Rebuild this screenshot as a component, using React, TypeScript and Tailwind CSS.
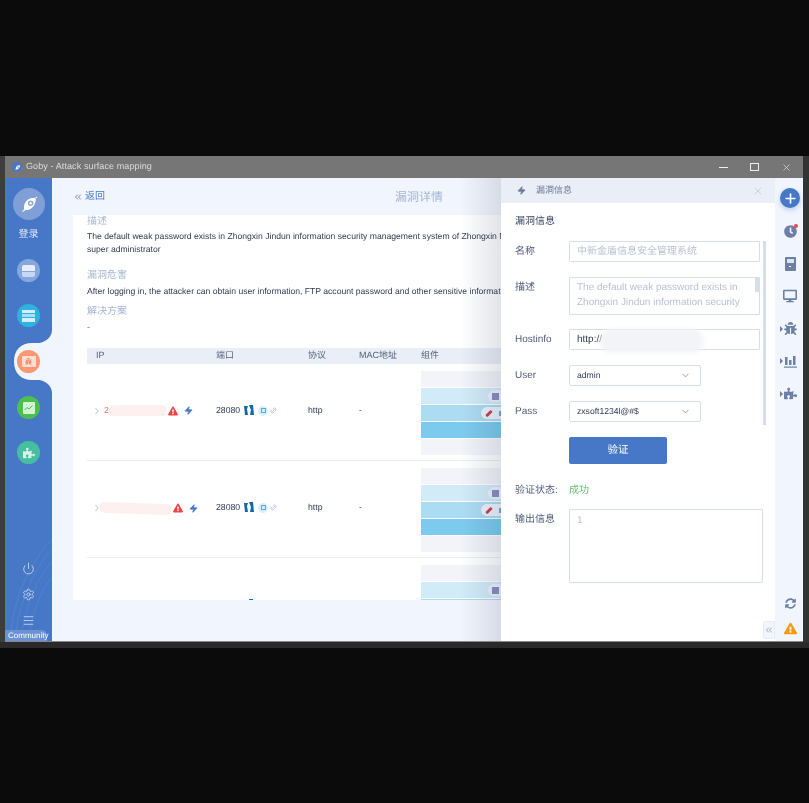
import { ChevronDown, ChevronRight, ChevronsLeft, Link2, Menu, Plus, Power, Settings, X, Zap } from "lucide-react";
import { FaBug, FaClock, FaDesktop, FaExclamationTriangle, FaPuzzlePiece, FaSyncAlt } from "react-icons/fa";

const font = "font-['Liberation_Sans','Noto_Sans_CJK_SC',sans-serif] [text-rendering:geometricPrecision]";

function Logo({ size }: { size: number }) {
  return (
    <svg width={size} height={size} viewBox="0 0 32 32" fill="none">
      <path d="M7 25c2-1 3-2 3-3-1-5 2-11 8-13 3-1 5-1 6 0 1 2 0 6-2 9-3 4-7 6-10 5-1 1-3 3-5 2z" fill="white" />
      <circle cx="18" cy="15" r="3.4" fill="#8ea9d8" />
      <circle cx="18" cy="15" r="1.5" fill="white" />
      <circle cx="25" cy="8" r="1" fill="white" />
    </svg>
  );
}

function NavIcon({ bg, children }: { bg: string; children: React.ReactNode }) {
  return (
    <div className={`flex h-[23px] w-[23px] items-center justify-center rounded-full ${bg}`}>
      {children}
    </div>
  );
}

function Sidebar() {
  return (
    <div className="relative flex w-[47px] shrink-0 flex-col items-center overflow-hidden bg-[#4778c7] pt-[10px]">
      <div className="flex h-[32px] w-[32px] items-center justify-center rounded-full bg-[#7f9fd6]">
        <Logo size={26} />
      </div>
      <div className="mt-[8px] text-[10px] leading-[14px] text-[#e4ecfa]">登录</div>
      <div className="mt-[17px]">
        <NavIcon bg="bg-[#87a6dc]">
          <div className="h-[12px] w-[13px] rounded-[2px] border-b-[5px] border-t-[6px] border-b-[#c9d8f2] border-t-[#e6eefb]" />
        </NavIcon>
      </div>
      <div className="mt-[22px]">
        <NavIcon bg="bg-[#30b1e0]">
          <div className="flex h-[12px] w-[13px] flex-col gap-[1px]">
            <div className="h-[3px] bg-[#d3effa]" />
            <div className="h-[3px] bg-[#a9e0f5]" />
            <div className="h-[4px] bg-[#d3effa]" />
          </div>
        </NavIcon>
      </div>

      {/* white tab behind the selected item */}
      <svg className="absolute left-0 top-[152px]" width="47" height="63" viewBox="0 0 47 63">
        <path d="M47 0v63c0-7-6-12-13-13h-7C16 50 9 43 9 31.5S16 13 27 13h7c7-1 13-6 13-13z" fill="#f1f5fd" />
      </svg>

      <div className="relative mt-[23px]">
        <NavIcon bg="bg-[#fb9772]">
          <div className="flex h-[11px] w-[14px] items-center justify-center rounded-[1px] bg-[#fde0d3]">
            <FaBug size={7} className="text-[#ef8a63]" />
          </div>
        </NavIcon>
      </div>
      <div className="relative mt-[23px]">
        <NavIcon bg="bg-[#4bc04f]">
          <div className="flex h-[12px] w-[12px] items-center justify-center rounded-[1px] bg-[#d5f2d3]">
            <svg width="9" height="6" viewBox="0 0 9 6" fill="none">
              <path d="M0.5 5 3 2.5l2 1.5 3.5-3.5" stroke="#4bc04f" strokeWidth="1" />
            </svg>
          </div>
        </NavIcon>
      </div>
      <div className="mt-[22px]">
        <NavIcon bg="bg-[#45bf9f]">
          <FaPuzzlePiece size={12} className="text-[#d8f3eb]" />
        </NavIcon>
      </div>

      {/* wave lines at the bottom */}
      <svg className="absolute bottom-0 left-0" width="47" height="110" viewBox="0 0 47 110" fill="none">
        <path d="M5 110C8 70 22 35 47 8" stroke="#5f8ad0" strokeWidth="0.5" />
        <path d="M10 110C13 75 26 42 47 18" stroke="#5f8ad0" strokeWidth="0.5" />
        <path d="M16 110C19 80 30 50 47 30" stroke="#5f8ad0" strokeWidth="0.5" />
        <path d="M24 110C26 85 34 62 47 46" stroke="#5f8ad0" strokeWidth="0.5" />
      </svg>

      <div className="relative mt-auto flex flex-col items-center gap-[13px] text-[#dbe5f7]">
        <Power size={13} strokeWidth={1.4} />
        <Settings size={13} strokeWidth={1.4} />
        <Menu size={13} strokeWidth={1.4} />
      </div>
      <div className="relative mt-[3px] h-[11px] w-[42px] self-start rounded-tr-[5px] bg-[#6b92d3] pl-[3px] text-[8px] leading-[11px] text-white">
        Community
      </div>
    </div>
  );
}

function BlueMark() {
  return (
    <svg width="10" height="11" viewBox="0 0 10 11">
      <path d="M0 1h4l-1 3 1 6H1z" fill="#0e6aa8" />
      <path d="M5 0h4l1 10H6l1-5z" fill="#0e6aa8" />
    </svg>
  );
}

function ComponentStack() {
  return (
    <div className="mt-[7px] flex w-[200px] flex-col gap-px self-start">
      <div className="h-[16px] bg-[#f2f4f9]" />
      <div className="h-[16px] bg-[#d2ebf8] pl-[67px] pt-[2px]">
        <div className="flex h-[12px] items-center rounded-l-full bg-[#eef3fa] pl-[4px]">
          <div className="h-[7px] w-[7px] bg-[#8a8fc4]" />
        </div>
      </div>
      <div className="h-[16px] bg-[#acdcf4] pl-[60px] pt-[2px]">
        <div className="flex h-[12px] items-center gap-[6px] rounded-l-full bg-[#eef3fa] pl-[4px]">
          <div className="h-[3px] w-[8px] -rotate-45 rounded-full bg-[#c8405a]" />
          <div className="h-[5px] w-[5px] bg-[#6fa8dc]" />
        </div>
      </div>
      <div className="h-[16px] bg-[#7ccbee]" />
      <div className="h-[16px] bg-[#f2f4f9]" />
    </div>
  );
}

function TableRow({ smear, masked }: { smear: string; masked: boolean }) {
  return (
    <div className="grid h-[97px] grid-cols-[129px_92px_51px_62px_200px] items-center border-b border-[#e9edf6] pb-[2px] text-[8.7px] text-[#2f3b52]">
      <div className="flex items-center pl-[5px] text-[#f0706a]">
        <ChevronRight size={10} className="text-[#a7b0c4]" />
        <span className="ml-[2px] w-[5px]">{masked ? "" : "2"}</span>
        <div className={`h-[11px] rounded-full bg-[#fdf1ef] ${smear}`} />
        <FaExclamationTriangle size={10} className="ml-px text-[#ee4444]" />
        <Zap size={9} className="ml-[6px] fill-[#4778c7] text-[#4778c7]" />
      </div>
      <div className="flex items-center">
        <span className="w-[28px]">28080</span>
        <BlueMark />
        <div className="ml-[4px] flex h-[10px] w-[10px] items-center justify-center rounded-full bg-[#d8eefa]">
          <div className="h-[5px] w-[5px] border border-[#62a5dc]" />
        </div>
        <Link2 size={7} className="ml-[2px] -rotate-45 text-[#8ea2d4]" />
      </div>
      <div>http</div>
      <div>-</div>
      <ComponentStack />
    </div>
  );
}

function Main() {
  return (
    <div className="relative flex min-w-0 flex-1 flex-col overflow-hidden bg-[#f1f5fd]">
      <div className="relative flex h-[37px] shrink-0 items-center pl-[21px] text-[10px] text-[#4778c7]">
        <ChevronsLeft size={10} />
        <span className="ml-[2px]">返回</span>
        <span className="absolute left-[343px] text-[12px] text-[#a9b6d0]">漏洞详情</span>
      </div>
      <div className="ml-[21px] h-[385px] w-[600px] overflow-hidden bg-white pl-[14px]">
        <div className="text-[10px] leading-[13px] text-[#a9b6d0]">描述</div>
        <div className="mt-[2px] whitespace-nowrap text-[8.6px] leading-[13px] text-[#2f3b52]">
          The default weak password exists in Zhongxin Jindun information security management system of Zhongxin Network
          <br />
          super administrator
        </div>
        <div className="mt-[13px] text-[10px] leading-[13px] text-[#a9b6d0]">漏洞危害</div>
        <div className="mt-[3px] whitespace-nowrap text-[8.6px] leading-[13px] text-[#2f3b52]">
          After logging in, the attacker can obtain user information, FTP account password and other sensitive information
        </div>
        <div className="mt-[7px] text-[10px] leading-[13px] text-[#a9b6d0]">解决方案</div>
        <div className="mt-[3px] text-[9px] leading-[13px] text-[#6b7a94]">-</div>
        <div className="mt-[14px] grid h-[16px] grid-cols-[129px_92px_51px_62px_200px] items-center bg-[#e9eef7] text-[9px] text-[#56637c]">
          <span className="pl-[9px]">IP</span>
          <span>端口</span>
          <span>协议</span>
          <span>MAC地址</span>
          <span>组件</span>
        </div>
        <TableRow smear="w-[58px]" masked={false} />
        <TableRow smear="-ml-[10px] w-[73px] rotate-2" masked={true} />
        <TableRow smear="w-[58px] opacity-0" masked={true} />
      </div>
      {/* shadow cast by the drawer */}
      <div className="absolute inset-y-0 right-0 w-[40px] bg-gradient-to-r from-transparent to-[#0f1f401f]" />
    </div>
  );
}

function Field({ label, children, className }: { label: string; children: React.ReactNode; className: string }) {
  return (
    <div className={`flex items-start ${className}`}>
      <div className="w-[54px] shrink-0 pt-[4px] text-[10px] leading-[13px] text-[#4f5d78]">{label}</div>
      {children}
    </div>
  );
}

function Select({ value }: { value: string }) {
  return (
    <div className="flex h-[21px] w-[132px] items-center justify-between rounded-[2px] border border-[#d5deea] pl-[7px] pr-[9px] text-[8.6px] text-[#2f3b52]">
      <span>{value}</span>
      <ChevronDown size={11} className="text-[#8b97ad]" />
    </div>
  );
}

function Drawer() {
  return (
    <div className="relative flex w-[274px] shrink-0 flex-col bg-white">
      <div className="flex h-[25px] shrink-0 items-center bg-[#e9eef7] pl-[16px] pr-[11px] text-[9px] text-[#6b7a94]">
        <Zap size={9} className="fill-[#6b7a94] text-[#6b7a94]" />
        <span className="ml-[10px]">漏洞信息</span>
        <X size={12} strokeWidth={1.2} className="ml-auto text-[#b5bfd0]" />
      </div>
      <div className="pl-[14px]">
        <div className="mt-[12px] text-[10px] leading-[14px] text-[#3b475f]">漏洞信息</div>
        <Field label="名称" className="mt-[12px]">
          <div className="flex h-[21px] w-[191px] items-center rounded-[1px] border border-[#d5deea] pl-[7px] text-[10px] leading-[19px] text-[#b9c2d2]">
            中新金盾信息安全管理系统
          </div>
        </Field>
        <Field label="描述" className="mt-[15px]">
          <div className="relative h-[38px] w-[191px] overflow-hidden rounded-[1px] border border-[#d5deea] pl-[7px] pt-[3px] text-[10px] leading-[14.5px] text-[#b9c2d2]">
            The default weak password exists in
            <br />
            Zhongxin Jindun information security
            <div className="absolute right-0 top-0 h-[14px] w-[4px] bg-[#d5deea]" />
          </div>
        </Field>
        <Field label="Hostinfo" className="mt-[14px]">
          <div className="relative flex h-[21px] w-[191px] items-center rounded-[1px] border border-[#d5deea] pl-[7px] text-[10px] text-[#2f3b52]">
            http://
            <div className="absolute left-[30px] -top-[1px] h-[24px] w-[104px] rounded-full bg-[#f3f4f7] blur-[2px]" />
          </div>
        </Field>
        <Field label="User" className="mt-[15px]">
          <Select value="admin" />
        </Field>
        <Field label="Pass" className="mt-[15px]">
          <Select value="zxsoft1234l@#$" />
        </Field>
        <div className="ml-[54px] mt-[15px] flex h-[27px] w-[98px] items-center justify-center rounded-[2px] bg-[#4778c7] text-[10.5px] text-white">
          验证
        </div>
        <div className="mt-[20px] flex items-center text-[10px] leading-[14px]">
          <span className="w-[54px] text-[#4f5d78]">验证状态:</span>
          <span className="text-[#62bd6a]">成功</span>
        </div>
        <Field label="输出信息" className="mt-[11px]">
          <div className="h-[74px] w-[194px] rounded-[1px] border border-[#d5deea] pl-[7px] pt-[3px] text-[10px] text-[#b9c2d2]">1</div>
        </Field>
      </div>
      <div className="absolute right-[9px] top-[63px] h-[184px] w-[3px] bg-[#d5deea]" />
      <div className="absolute bottom-[2px] right-0 flex h-[18px] w-[12px] items-center justify-center rounded-l-[2px] border border-[#e6ecf7] bg-[#f1f5fd] text-[#8b97ad]">
        <ChevronsLeft size={10} />
      </div>
    </div>
  );
}

function RailItem({ children, arrow }: { children: React.ReactNode; arrow?: boolean }) {
  return (
    <div className="relative flex h-[32.5px] items-center justify-center text-[#6d7fa6]">
      {arrow && <div className="absolute left-[3px] h-0 w-0 border-y-[3px] border-l-[3px] border-y-transparent border-l-[#6d7fa6]" />}
      {children}
    </div>
  );
}

function Rail() {
  return (
    <div className="flex w-[28px] shrink-0 flex-col bg-[#f1f5fd] pl-[2px] pt-[10px]">
      <div className="mx-auto mb-[7px] flex h-[20px] w-[20px] items-center justify-center rounded-full bg-[#4778c7] text-white shadow-[0_2px_5px_#4778c755]">
        <Plus size={15} strokeWidth={2.6} />
      </div>
      <RailItem>
        <div className="relative">
          <FaClock size={13} />
          <div className="absolute -right-[1px] -top-[1px] h-[4px] w-[4px] rounded-full bg-[#f04545]" />
        </div>
      </RailItem>
      <RailItem>
        <div className="flex h-[14px] w-[11px] flex-col items-center gap-[1px] rounded-[1px] bg-[#6d7fa6] pt-[2px]">
          <div className="h-[4px] w-[7px] bg-[#dbe3f2]" />
          <div className="mt-[2px] h-[1px] w-[2px] bg-white" />
        </div>
      </RailItem>
      <RailItem><FaDesktop size={14} /></RailItem>
      <RailItem arrow><FaBug size={13} /></RailItem>
      <RailItem arrow>
        <svg width="13" height="13" viewBox="0 0 13 13" fill="#6d7fa6">
          <rect x="1" y="2" width="2.5" height="8" />
          <rect x="5" y="5" width="2.5" height="5" />
          <rect x="9" y="1" width="2.5" height="9" />
          <rect x="0" y="11.5" width="13" height="1.2" />
        </svg>
      </RailItem>
      <RailItem arrow><FaPuzzlePiece size={13} /></RailItem>
      <div className="mt-auto flex flex-col items-center pb-[6px]">
        <FaSyncAlt size={11} className="text-[#6d7fa6]" />
        <FaExclamationTriangle size={13} className="mt-[13px] text-[#f79a0e]" />
      </div>
    </div>
  );
}

export default function App() {
  return (
    <div className={`${font} flex h-[803px] w-[809px] flex-col overflow-hidden bg-[#0b0b0b] pt-[156px] blur-[0.3px]`}>
      <div className="flex h-[486px] shrink-0">
        <div className="w-[5px] shrink-0 bg-[#3d3d3d]" />
        <div className="flex min-w-0 flex-1 flex-col border-b border-[#888888]">
          <div className="flex h-[22px] shrink-0 items-center bg-[#767676] pl-[7px] text-[9px] text-[#dddddd]">
            <div className="flex h-[10px] w-[10px] items-center justify-center rounded-full bg-[#4778c7]">
              <Logo size={9} />
            </div>
            <span className="ml-[4px] tracking-[0.1px]">Goby - Attack surface mapping</span>
            <div className="ml-auto mr-[11px] flex items-center gap-[22px] text-[#eeeeee]">
              <div className="h-px w-[9px] bg-[#eeeeee]" />
              <div className="h-[8px] w-[9px] border border-[#eeeeee]" />
              <X size={11} strokeWidth={1.3} />
            </div>
          </div>
          <div className="flex min-h-0 flex-1">
            <Sidebar />
            <Main />
            <Drawer />
            <Rail />
          </div>
        </div>
        <div className="w-[6px] shrink-0 bg-[#333333]" />
      </div>
      <div className="h-[6px] shrink-0 bg-[#2a2a2a]" />
    </div>
  );
}
